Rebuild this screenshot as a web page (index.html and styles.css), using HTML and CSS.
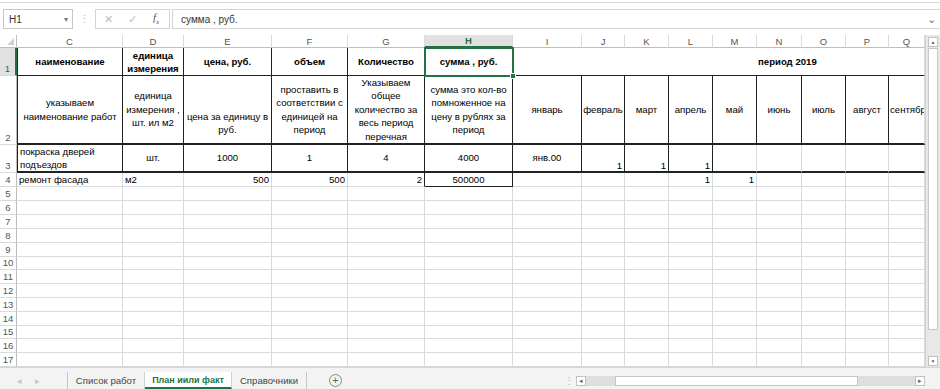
FILE: index.html
```html
<!DOCTYPE html>
<html lang="ru">

<head>
    <meta charset="UTF-8">
    <meta name="viewport" content="width=device-width, initial-scale=1.0">
    <title>План иили факт</title>
    <link rel="stylesheet" href="styles.css">
</head>

<body>
    <div class="app">
        <div class="ribbon-edge"></div>

        <!-- Строка формул -->
        <div class="formula-bar">
            <div class="name-box"><span>H1</span><span class="name-drop">▾</span></div>
            <div class="grip">⋮</div>
            <div class="fx-buttons">
                <span class="fx-btn">✕</span>
                <span class="fx-btn">✓</span>
                <span class="fx-btn fx-label">f<sub>x</sub></span>
            </div>
            <div class="formula-input"><span>сумма , руб.</span><span class="formula-expand">⌄</span></div>
        </div>

        <div class="sheet-area">
            <div class="grid" id="grid">
                <!-- Заголовки столбцов -->
                <div class="corner"><span class="corner-mark"></span></div>
                <div class="ch">C</div>
                <div class="ch">D</div>
                <div class="ch">E</div>
                <div class="ch">F</div>
                <div class="ch">G</div>
                <div class="ch sel">H</div>
                <div class="ch">I</div>
                <div class="ch">J</div>
                <div class="ch">K</div>
                <div class="ch">L</div>
                <div class="ch">M</div>
                <div class="ch">N</div>
                <div class="ch">O</div>
                <div class="ch">P</div>
                <div class="ch">Q</div>

                <!-- Строка 1 -->
                <div class="rh sel">1</div>
                <div class="c mid b kl kr kb">наименование</div>
                <div class="c mid b kr kb tight"><span>единица<br>измерения</span></div>
                <div class="c mid b kr kb">цена, руб.</div>
                <div class="c mid b kr kb">объем</div>
                <div class="c mid b kr kb">Количество</div>
                <div class="c mid b kr kb cur">сумма , руб.<span class="handle"></span></div>
                <div class="c b kb period">период 2019</div>

                <!-- Строка 2 -->
                <div class="rh">2</div>
                <div class="c mid kl kr kb2"><span>указываем<br>наименование работ</span></div>
                <div class="c mid kr kb2"><span>единица<br>измерения ,<br>шт. ил м2</span></div>
                <div class="c mid kr kb2 low"><span>цена за единицу в<br>руб.</span></div>
                <div class="c mid kr kb2"><span>проставить в<br>соответствии с<br>единицей на<br>период</span></div>
                <div class="c mid kr kb2"><span>Указываем<br>общее<br>количество за<br>весь период<br>перечная</span></div>
                <div class="c mid kr kb2"><span>сумма это кол-во<br>помноженное на<br>цену в рублях за<br>период</span></div>
                <div class="c mid kr kb2">январь</div>
                <div class="c mid kr kb2">февраль</div>
                <div class="c mid kr kb2">март</div>
                <div class="c mid kr kb2">апрель</div>
                <div class="c mid kr kb2">май</div>
                <div class="c mid kr kb2">июнь</div>
                <div class="c mid kr kb2">июль</div>
                <div class="c mid kr kb2">август</div>
                <div class="c kb2 clip">сентябр</div>

                <!-- Строка 3 -->
                <div class="rh">3</div>
                <div class="c left-mid kl kr kb2"><span>покраска дверей<br>подъездов</span></div>
                <div class="c mid kr kb2">шт.</div>
                <div class="c mid kr kb2">1000</div>
                <div class="c mid kr kb2">1</div>
                <div class="c mid kr kb2">4</div>
                <div class="c mid kr kb2">4000</div>
                <div class="c mid kr kb2">янв.00</div>
                <div class="c right num kr kb2">1</div>
                <div class="c right num kr kb2">1</div>
                <div class="c right num kr kb2">1</div>
                <div class="c kb2"></div>
                <div class="c kb2"></div>
                <div class="c kb2"></div>
                <div class="c kb2"></div>
                <div class="c kb2"></div>

                <!-- Строка 4 -->
                <div class="rh">4</div>
                <div class="c">ремонт фасада</div>
                <div class="c">м2</div>
                <div class="c right">500</div>
                <div class="c right">500</div>
                <div class="c right kr">2</div>
                <div class="c mid kr kb">500000</div>
                <div class="c"></div>
                <div class="c"></div>
                <div class="c"></div>
                <div class="c right">1</div>
                <div class="c right">1</div>
                <div class="c"></div>
                <div class="c"></div>
                <div class="c"></div>
                <div class="c"></div>
            </div>

            <div class="vscroll">
                <div class="vs-btn">▲</div>
                <div class="vs-thumb"></div>
                <div class="vs-btn vs-down">▼</div>
            </div>
        </div>

        <!-- Ярлыки листов -->
        <div class="tabbar">
            <div class="tab-nav"><span>◂</span><span>▸</span></div>
            <div class="tab tab-first">Список работ</div>
            <div class="tab active">План иили факт</div>
            <div class="tab tab-last">Справочники</div>
            <div class="tab-add">+</div>
            <div class="tab-grip">⋮</div>
            <div class="hscroll">
                <div class="hs-btn">◂</div>
                <div class="hs-track"><div class="hs-thumb"></div></div>
                <div class="hs-btn">▸</div>
            </div>
        </div>
    </div>

    <script>
        // пустые строки 5-17
        const grid = document.getElementById("grid");
        for (let r = 5; r <= 17; r++) {
            let html = `<div class="rh">${r}</div>`;
            for (let c = 0; c < 15; c++) {
                html += `<div class="c"></div>`;
            }
            grid.insertAdjacentHTML("beforeend", html);
        }
    </script>
</body>

</html>
```

FILE: styles.css
```css
* {
    box-sizing: border-box;
}

body {
    margin: 0;
    font-family: "Liberation Sans", Arial, sans-serif;
    background-color: #fff;
}

.app {
    width: 940px;
    height: 389px;
    overflow: hidden;
    display: flex;
    flex-direction: column;
}

.ribbon-edge {
    height: 7px;
    margin-top: 2px;
    border-top: 1px solid #d9d9d9;
    flex-shrink: 0;
}

/* строка формул */
.formula-bar {
    height: 20px;
    margin-bottom: 6px;
    display: flex;
    flex-shrink: 0;
    font-size: 10px;
    color: #333;
}

.name-box {
    width: 70px;
    margin-left: 3px;
    padding: 0 4px 0 5px;
    border: 1px solid #c6c6c6;
    display: flex;
    align-items: center;
    justify-content: space-between;
}

.name-drop {
    font-size: 8px;
    color: #777;
}

.grip {
    width: 22px;
    display: flex;
    align-items: center;
    justify-content: center;
    color: #b5b5b5;
    font-size: 11px;
}

.fx-buttons {
    width: 75px;
    border: 1px solid #d4d4d4;
    display: flex;
    align-items: center;
}

.fx-btn {
    width: 24px;
    text-align: center;
    color: #bdbdbd;
    font-size: 11px;
}

.fx-label {
    font-family: "Liberation Serif", serif;
    font-style: italic;
    color: #555;
    font-size: 11px;
}

.fx-label sub {
    font-size: 7px;
}

.formula-input {
    flex: 1;
    margin-left: 2px;
    padding: 0 4px 0 8px;
    border: 1px solid #d4d4d4;
    border-right: none;
    display: flex;
    align-items: center;
    justify-content: space-between;
}

.formula-expand {
    color: #777;
    font-size: 11px;
    line-height: 8px;
}

/* лист */
.sheet-area {
    height: 332px;
    display: flex;
    flex-shrink: 0;
}

.grid {
    width: 925px;
    height: 332px;
    overflow: hidden;
    display: grid;
    grid-template-columns: 17px 106px 61px 88px 76px 77px 88px 69px 43px 44px 44px 44px 45px 44px 43px 36px;
    grid-template-rows: 13px 28px 69px 28px 14px 14px 14px 14px 14px 14px 13px 14px 14px 14px 14px 13px 14px 14px;
}

.corner {
    border-right: 1px solid #bdbdbd;
    border-bottom: 1px solid #bdbdbd;
    display: flex;
    align-items: flex-end;
    justify-content: flex-end;
    padding: 0 2px 2px 0;
}

.corner-mark {
    width: 0;
    height: 0;
    border-left: 7px solid transparent;
    border-bottom: 7px solid #cfcfcf;
}

.ch {
    border-right: 1px solid #dadada;
    border-bottom: 1px solid #bdbdbd;
    color: #555;
    font-size: 9.5px;
    display: flex;
    align-items: center;
    justify-content: center;
}

.ch.sel {
    background-color: #e1e1e1;
    color: #217346;
    font-weight: bold;
    border-bottom: 2px solid #217346;
}

.rh {
    border-right: 1px solid #bdbdbd;
    border-bottom: 1px solid #dadada;
    color: #555;
    font-size: 9.5px;
    line-height: 12px;
    display: flex;
    align-items: flex-end;
    justify-content: center;
}

.rh.sel {
    background-color: #e1e1e1;
    color: #217346;
    border-right: 2px solid #217346;
}

.c {
    min-width: 0;
    padding: 0 2px;
    border-right: 1px solid #dadada;
    border-bottom: 1px solid #dadada;
    font-size: 9.6px;
    line-height: 13.5px;
    color: #000;
    white-space: nowrap;
    overflow: hidden;
    display: flex;
    align-items: flex-end;
    justify-content: flex-start;
}

.mid {
    align-items: center;
    justify-content: center;
    text-align: center;
}

.left-mid {
    align-items: center;
}

.right {
    justify-content: flex-end;
}

.num {
    line-height: 9px;
    padding-bottom: 1px;
}

.b {
    font-weight: bold;
}

.tight {
    line-height: 13px;
}

.low {
    padding-top: 27px;
}

.clip {
    align-items: center;
    padding-left: 1px;
}

.kr {
    border-right-color: #222;
}

.kb {
    border-bottom-color: #222;
}

.kb2 {
    border-bottom: 2px solid #222;
}

.kl {
    border-left: 1px solid #222;
}

.period {
    grid-column: span 9;
    align-items: center;
    padding-left: 245px;
}

/* выделенная ячейка H1 */
.cur {
    position: relative;
    overflow: visible;
    outline: 2px solid #217346;
    outline-offset: -1px;
}

.handle {
    position: absolute;
    right: -4px;
    bottom: -4px;
    width: 6px;
    height: 6px;
    background-color: #217346;
    border: 1px solid #fff;
    z-index: 2;
}

/* вертикальная прокрутка */
.vscroll {
    width: 15px;
    border-left: 1px solid #d0d0d0;
    background-color: #e8e8e8;
    padding: 2px 2px 1px;
    display: flex;
    flex-direction: column;
}

.vs-btn {
    height: 10px;
    border: 1px solid #c2c2c2;
    background-color: #fff;
    color: #666;
    font-size: 5px;
    line-height: 8px;
    text-align: center;
}

.vs-thumb {
    height: 282px;
    margin-top: 1px;
    background-color: #fff;
    border: 1px solid #c8c8c8;
}

.vs-down {
    margin-top: auto;
}

/* ярлыки листов */
.tabbar {
    height: 22px;
    flex-shrink: 0;
    padding-top: 4px;
    background-color: #f3f3f3;
    border-top: 1px solid #d4d4d4;
    display: flex;
    font-size: 9.6px;
    color: #444;
}

.tab-nav {
    width: 68px;
    padding-left: 17px;
    display: flex;
    align-items: center;
    gap: 13px;
    color: #c4c4c4;
    font-size: 9px;
    border-right: 1px solid #c6c6c6;
}

.tab {
    display: flex;
    align-items: center;
    justify-content: center;
    border-right: 1px solid #d0d0d0;
    white-space: nowrap;
}

.tab-first {
    width: 77px;
}

.tab.active {
    width: 87px;
    background-color: #fff;
    color: #217346;
    font-weight: bold;
    font-size: 9px;
    border-bottom: 2px solid #217346;
}

.tab-last {
    width: 75px;
    border-right-color: #c6c6c6;
}

.tab-add {
    width: 13px;
    height: 13px;
    margin: 0 0 0 22px;
    align-self: center;
    border: 1px solid #8a8a8a;
    border-radius: 50%;
    color: #666;
    font-size: 11px;
    line-height: 10px;
    text-align: center;
}

.tab-grip {
    width: 12px;
    margin-left: auto;
    display: flex;
    align-items: center;
    color: #b5b5b5;
    font-size: 10px;
}

.hscroll {
    width: 349px;
    height: 10px;
    margin: 1px 15px 0 0;
    align-self: center;
    display: flex;
}

.hs-btn {
    width: 10px;
    border: 1px solid #c2c2c2;
    background-color: #fff;
    color: #666;
    font-size: 7px;
    line-height: 8px;
    text-align: center;
}

.hs-track {
    flex: 1;
    background-color: #dedede;
    padding-left: 29px;
    padding-right: 57px;
}

.hs-thumb {
    height: 100%;
    background-color: #fff;
    border: 1px solid #c6c6c6;
}
```
